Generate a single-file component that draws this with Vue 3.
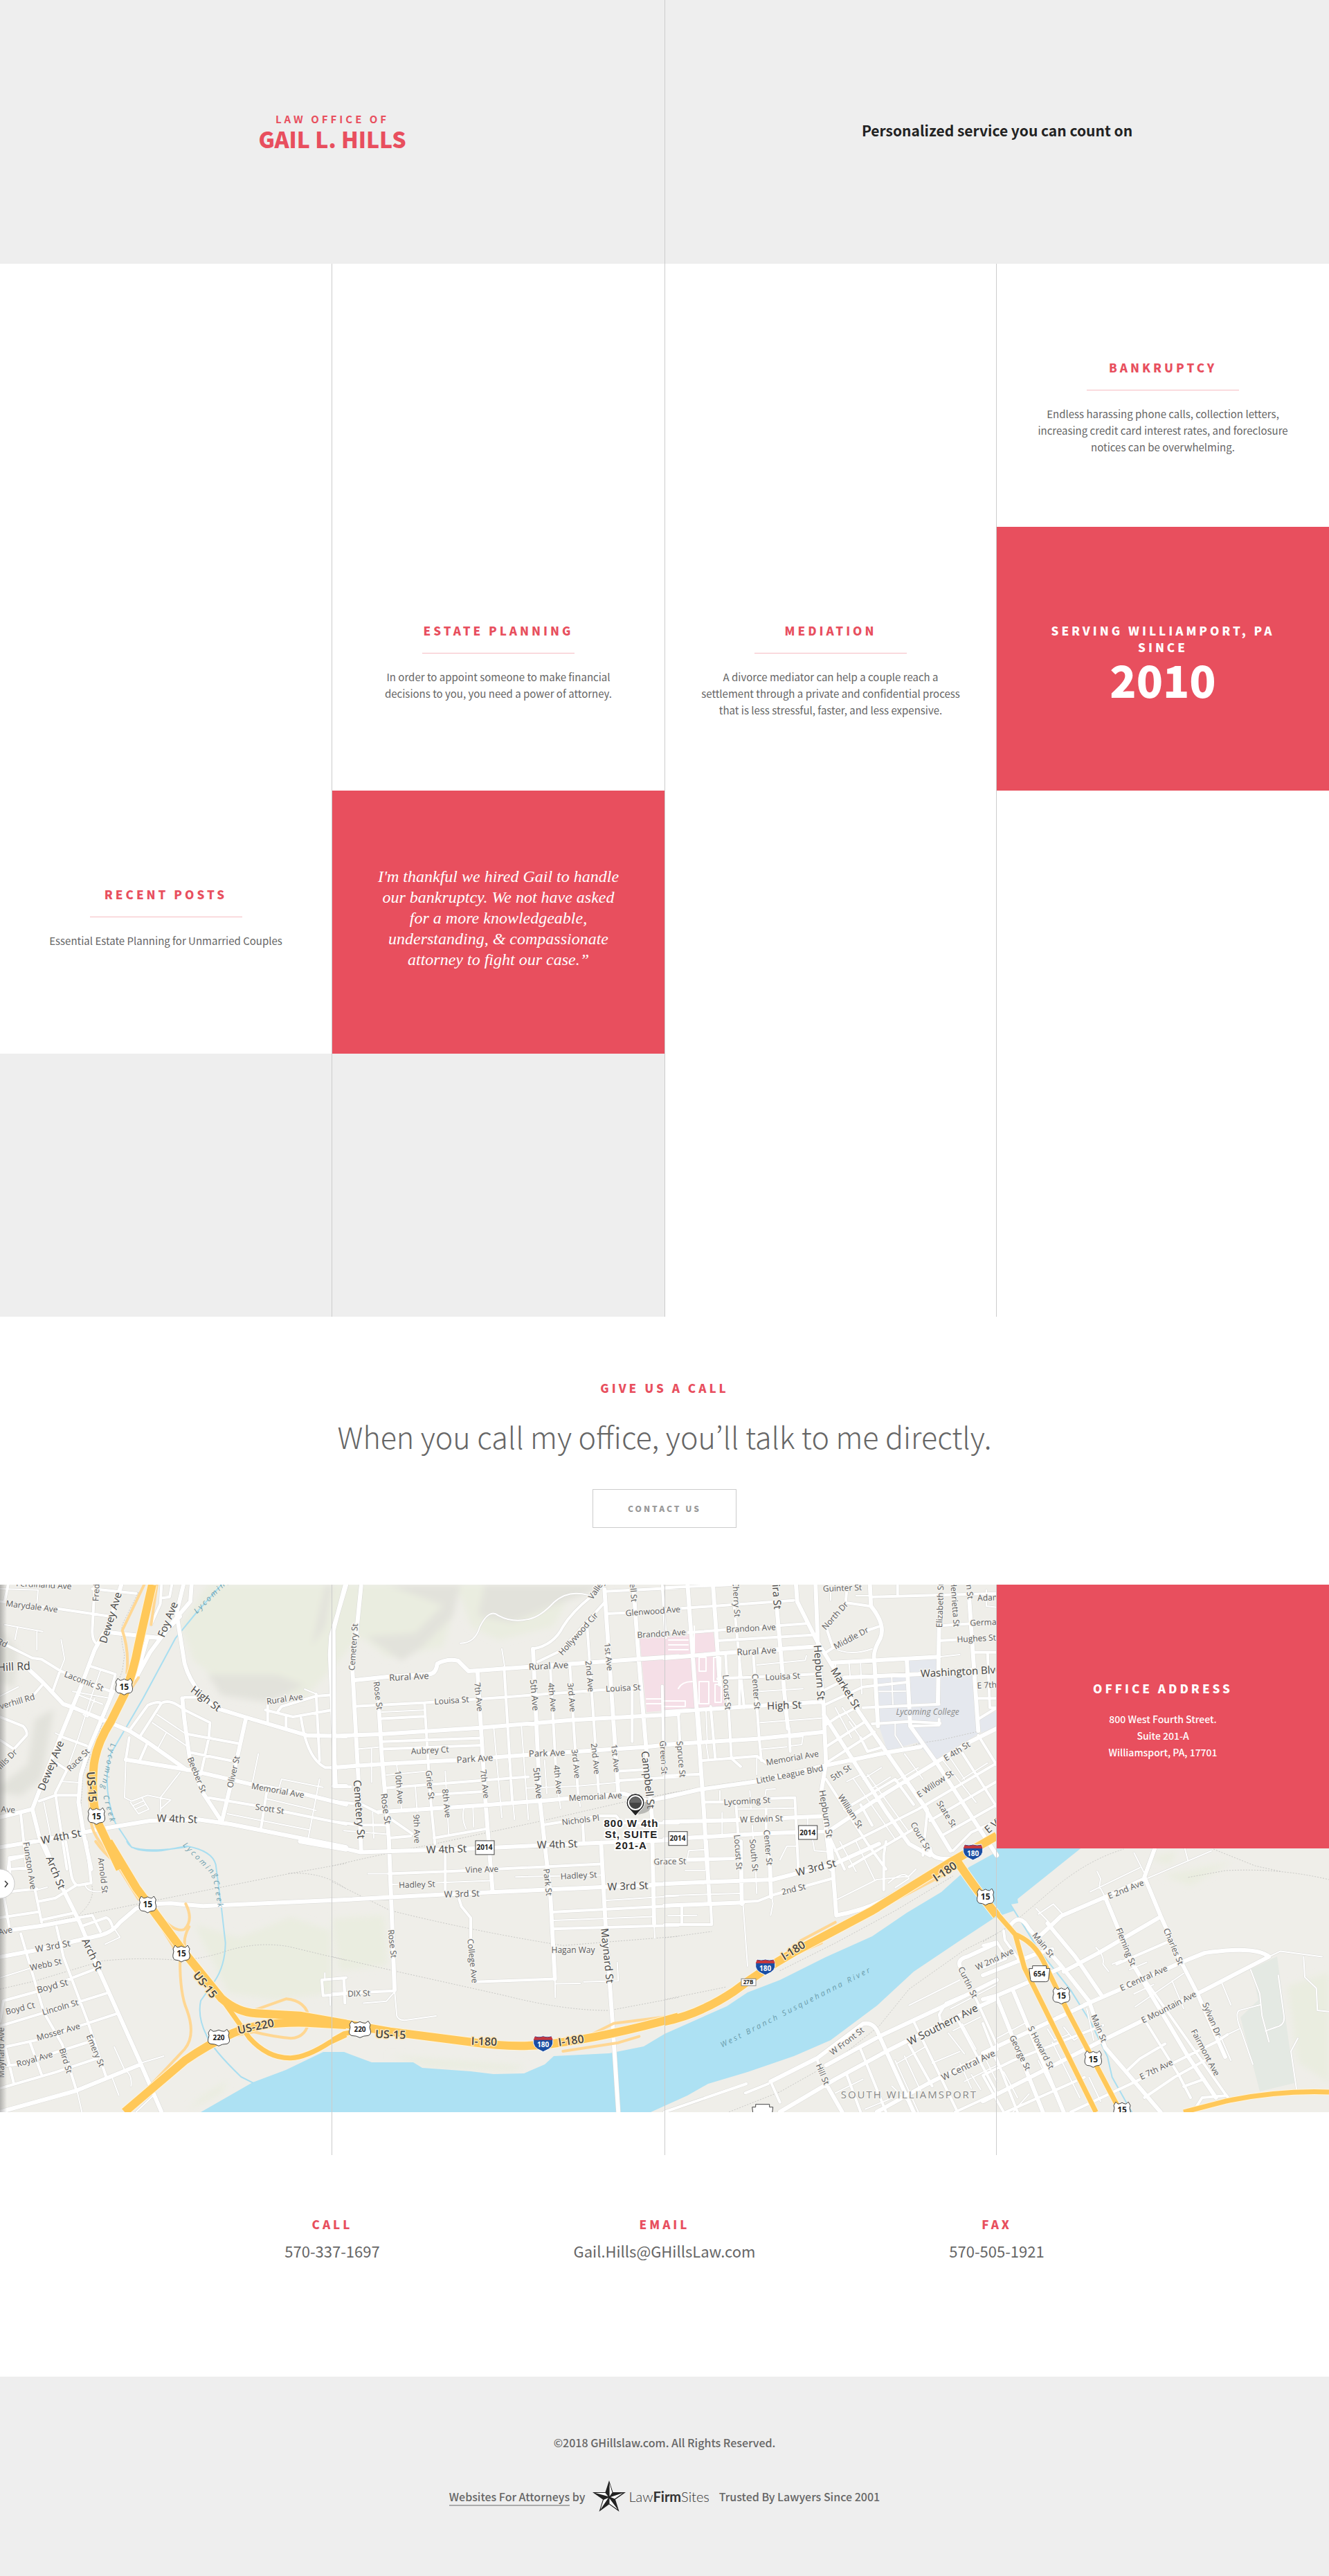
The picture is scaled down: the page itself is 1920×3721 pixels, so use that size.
<script setup>
const cells = [
  [null, null, null, { title: 'Bankruptcy', body: 'Endless harassing phone calls, collection letters, increasing credit card interest rates, and foreclosure notices can be overwhelming.' }],
  [
    null,
    { title: 'Estate Planning', body: 'In order to appoint someone to make financial decisions to you, you need a power of attorney.' },
    { title: 'Mediation', body: 'A divorce mediator can help a couple reach a settlement through a private and confidential process that is less stressful, faster, and less expensive.' },
    { kind: 'since', title: 'Serving Williamport, PA Since', year: '2010' },
  ],
  [
    { title: 'Recent Posts', body: 'Essential Estate Planning for Unmarried Couples', link: true },
    { kind: 'quote', body: "I'm thankful we hired Gail to handle our bankruptcy. We not have asked for a more knowledgeable, understanding, & compassionate attorney to fight our case.”" },
    null,
    null,
  ],
  [{ kind: 'grey' }, { kind: 'grey' }, null, null],
].flat()

const contacts = [
  { title: 'Call', value: '570-337-1697', href: 'tel:5703371697' },
  { title: 'Email', value: 'Gail.Hills@GHillsLaw.com', href: 'mailto:Gail.Hills@GHillsLaw.com' },
  { title: 'Fax', value: '570-505-1921', href: 'tel:5705051921' },
]

// The map is drawn from six sheets. Each has its own origin and units per map pixel.
// Labels are [text, startX, startY, endX, endY, size, tone].
const sheets = [
  {
    ox: 0, oy: -9, sx: 3, sy: 3,
    wide: [
      'M525,30 L470,200 L410,310 L350,470 L260,690 L205,830 L140,1000',
      'M795,27 L765,150 L800,370 Q820,440 870,500 L930,560 L1060,600 L1330,680 L1500,684',
      'M830,27 L825,100 L740,200 L650,320 L590,430', 'M480,235 L690,258 L780,165',
      'M110,380 L185,450 L275,545 L320,560 L440,610 L560,660 L640,710 L810,830',
      'M0,1165 L150,1140 L470,1080 L650,1050 L860,1045 L1000,1065 L1500,1165',
      'M790,520 L800,620 L825,800 L880,930 L965,1060', 'M1065,610 L1025,790 L960,1060',
      'M545,785 L820,830 L1080,890 L1300,930 L1500,980', 'M1500,30 L1435,250 L1430,330 L1455,900 L1500,900',
      'M490,490 L440,610 L385,740 L350,850 L340,970 L365,1120 L395,1260', 'M0,1035 L140,1000 L170,1120 L215,1220 L230,1260',
      'M640,255 L590,430',
    ],
    mid: [
      'M0,100 L240,130 L480,165', 'M400,45 L590,65', 'M410,27 L400,230 Q400,270 420,285', 'M700,27 L695,110 L655,200', 'M745,27 L735,80 L705,85',
      'M30,290 L140,345 L180,350 L260,400 L480,490', 'M185,460 L150,500', 'M260,400 L230,485', 'M0,600 L100,640 Q120,660 115,680 L60,740 L0,700',
      'M390,380 L500,415 L475,510', 'M265,685 L375,725', 'M245,800 L290,830 L240,930 L250,1000 L290,1260', 'M170,965 L240,940 L345,940',
      'M90,1020 L115,1260', 'M850,515 L800,515 Q780,530 795,570', 'M700,540 Q740,520 800,570 L910,625 L905,690 L870,850',
      'M560,660 L640,550 Q680,530 700,540 L610,680', 'M560,690 L545,785', 'M640,710 L605,790', 'M815,675 L1030,715', 'M830,755 L1000,790',
      'M905,950 L1110,985 L1230,1010 L1500,1065', 'M1155,930 L1130,1090', 'M1160,540 L1160,620', 'M1205,575 L1220,555 L1370,510 L1440,505',
      'M1150,570 L1270,600 L1440,570', 'M1240,600 L1240,650', 'M1370,500 L1385,790', 'M1305,605 Q1330,780 1410,820 L1500,820', 'M1440,684 L1500,684',
      'M35,1260 L40,1220 L120,1200', 'M35,27 L20,100',
    ],
    thin: [
      'M0,45 L165,50 L160,110', 'M20,200 L185,230', 'M160,225 L160,310', 'M75,215 L65,265', 'M265,265 L280,350 L260,400', 'M435,400 L390,530 L340,690 L290,830',
      'M340,505 L445,545', 'M315,490 L480,520', 'M360,590 L380,600 L410,520', 'M240,670 L270,685', 'M0,510 L80,470', 'M270,880 L345,885', 'M190,970 L220,1120',
      'M680,590 L800,670', 'M660,625 L815,730', 'M720,670 L685,735', 'M985,1020 L1340,1090', 'M1385,870 L1335,1130', 'M1155,955 L1370,1005',
      'M1210,905 L1220,870 L1400,905', 'M1120,760 L1095,880', 'M545,790 L540,950 L570,965 L640,940 L740,960 L695,1000', 'M780,840 L695,950 L697,1010',
      'M565,970 L600,1020 L645,1000 L615,950', 'M575,985 L620,965 M585,1000 L630,980', 'M1320,480 L1370,500',
    ],
    rail: ['M600,60 L530,200 Q520,260 540,330 L530,400 L440,640 L360,850 L350,1000 L375,1130 L390,1260'],
    ramp: ['M625,27 L530,225 Q560,310 550,410', 'M680,27 L655,200', 'M600,430 L560,490', 'M385,900 L395,1060 Q410,1140 510,1220 L550,1260'],
    creek: ['M960,27 L850,150 L760,260 L620,520 L480,760 Q440,900 500,1060 L570,1165 Q640,1190 810,1163'],
    motor: ['M660,27 L600,290 Q580,400 540,500 L480,620 Q410,730 405,830 Q395,970 425,1060 L520,1260'],
    labels: [
      ['Ferdinand Ave', 60, 20, 320, 35, 12], ['Marydale Ave', 32, 108, 244, 135, 12], ['Fredrick St', 414, 110, 424, -90, 12], ['Dewey Ave', 447, 275, 511, 65, 15],
      ['Foy Ave', 697, 250, 757, 105, 15], ['Rd', -8, 270, 28, 288, 12], ['Hill Rd', 5, 385, 115, 380, 16], ['Lacomic St', 285, 415, 443, 475, 12],
      ['Overhill Rd', -25, 562, 147, 512, 12], ['Mills Dr', -20, 835, 66, 748, 12], ['Dewey Ave', 180, 912, 260, 710, 15], ['Race St', 297, 828, 380, 745, 12],
      ['High St', 838, 480, 947, 562, 15], ['Rural Ave', 1159, 533, 1308, 512, 12], ['Beeber St', 825, 782, 882, 920, 12], ['Oliver St', 995, 912, 1028, 765, 12],
      ['Memorial Ave', 1097, 900, 1311, 938, 12], ['Scott St', 1110, 990, 1228, 1008, 12], ['W 4th St', 683, 1038, 852, 1045, 15], ['W 4th St', 180, 1135, 348, 1103, 15],
      ['Ave', 3, 1000, 67, 1003, 12], ['US-15', 393, 840, 402, 967, 16, 'dark'], ['Lycoming', 848, 142, 990, 0, 11, 'water'], ['Lycoming', 488, 728, 450, 910, 11, 'water'], ['Creek', 460, 945, 490, 1055, 11, 'water'],
    ],
    shields: [['us', '15', 538, 469], ['us', '15', 418, 1030]],
  },
  {
    ox: 0, oy: 371, sx: 3, sy: 3,
    wide: [
      'M195,20 L270,200 L345,350 L370,410 L430,560 L600,940 L700,1172', 'M0,500 L160,470 L310,435 L440,405 Q490,390 520,350 L590,290 L680,270 L740,268 L880,280 L1500,252',
      'M0,1172 L330,1080 L600,970', 'M0,390 L180,365 L340,335', 'M1300,0 L1500,35',
    ],
    mid: [
      'M45,170 L40,70 L110,60 M45,120 L120,115', 'M150,200 L180,350', 'M0,225 L60,215 L160,205', 'M15,230 L40,370', 'M0,330 L165,305', 'M180,340 L320,310',
      'M285,0 L310,150 Q320,190 340,190 L395,180 L375,0', 'M165,260 L240,245 L330,190', 'M90,400 L190,740 L270,880 L330,1075', 'M245,370 L275,500 L380,780 L460,1020',
      'M0,780 L15,690 L160,650 L420,550', 'M0,800 L180,745 L470,655', 'M0,895 L160,860 L510,745', 'M0,975 L80,965 L380,870', 'M0,1070 L240,1000 L420,940',
      'M25,900 L60,1050', 'M130,870 L180,1010', 'M340,330 L400,320 L435,390', 'M360,365 L460,330 Q480,335 490,380', 'M1500,590 L1395,600 L1400,668 L1500,660', 'M1490,600 L1495,700',
    ],
    thin: [
      'M160,210 L205,198', 'M370,190 Q380,225 450,215', 'M490,370 L520,415 L455,445', 'M0,590 L130,550', 'M495,890 L540,990 Q575,1010 568,1060', 'M485,1020 L515,1100', 'M610,960 L710,930',
      'M335,1085 L355,1172', 'M665,1100 L590,1172', 'M1408,570 L1408,600 M1430,670 L1432,710',
    ],
    rail: ['M0,640 L150,605 L440,518 Q600,500 780,515 Q860,510 950,485 Q1100,430 1250,455 L1500,515', 'M190,355 L330,325 L600,270 L900,210 L1250,140 L1500,95', 'M1250,138 Q1400,130 1500,205', 'M395,180 Q420,250 340,320'],
    ramp: ['M415,0 Q450,50 500,90 L600,250', 'M680,310 Q760,400 800,380 Q840,340 805,270', 'M820,370 Q790,420 805,470', 'M780,515 Q780,660 810,730 Q850,840 800,900 L640,1070', 'M830,500 L960,660 Q1050,750 1120,725 L1240,682 Q1330,690 1340,770 Q1330,850 1260,853 Q1180,845 1100,825 L1000,845', 'M680,340 L760,470'],
    creek: ['M550,0 Q570,50 700,40 L810,20', 'M810,20 Q920,40 935,100 L960,290 L977,440 Q975,540 930,605 L870,690 Q855,760 895,840 Q920,900 1045,1020 L1095,1045'],
    motor: ['M470,0 L590,200 L790,470 L960,680 Q1030,740 1110,745 L1300,755 L1500,790', 'M540,1172 L800,950 Q900,880 1010,830 Q1130,780 1330,785 L1500,795'],
    motorMid: ['M960,680 L1080,850 Q1160,940 1260,938 Q1330,935 1430,870 L1500,838'],
    labels: [
      ['Funston Ave', 113, 10, 145, 200, 12], ['Arch St', 215, 70, 268, 200, 15], ['Arnold St', 438, 78, 455, 215, 12], ['Arch St', 370, 425, 430, 555, 15], ['Ave', 0, 392, 47, 382, 12],
      ['W 3rd St', 152, 467, 305, 440, 13], ['Webb St', 135, 547, 262, 519, 12], ['Boyd St', 160, 645, 294, 608, 13], ['Boyd Ct', 28, 738, 147, 708, 12], ['Lincoln St', 187, 740, 335, 697, 12],
      ['Mosser Ave', 165, 850, 340, 800, 12], ['Royal Ave', 76, 964, 224, 922, 12], ['Bird St', 270, 900, 300, 1000, 12], ['Emery St', 387, 843, 440, 970, 12], ['Maynard Ave', 5, 1030, 5, 800, 12],
      ['US-15', 848, 570, 930, 672, 16, 'dark'], ['US-220', 1030, 818, 1187, 785, 16, 'dark'], ['Lycoming', 812, 22, 935, 145, 11, 'water'], ['Creek', 938, 175, 957, 285, 11, 'water'],
    ],
    shields: [['us', '15', 640, 273], ['us', '15', 786, 486], ['us', '220', 948, 850]],
  },
  {
    ox: 480, oy: -9, sx: 3, sy: 1.8667,
    wide: [
      'M0,720 L120,738 L620,728 L1180,712 L1500,705', 'M0,868 L480,852 L1180,832 L1500,822', 'M200,630 L640,612 L900,600 L1260,580 L1370,600 L1500,582',
      'M90,275 L240,265 L420,258 Q450,258 455,230 Q500,215 545,222 L590,250 L1500,210', 'M0,425 L210,420 L650,402 L1040,382 L1500,366', 'M0,510 L220,500 L540,490 L860,475 L1350,455 L1500,445',
      'M125,20 L88,250 L115,560 L125,735', 'M195,280 L215,480 L245,700 L255,860 L270,1110', 'M630,255 L665,610 L695,845', 'M870,190 L900,600 L945,850 L965,1080',
      'M1180,30 L1240,580', 'M1305,20 L1330,230 L1385,640 L1395,930', 'M1165,712 L1185,940 L1215,1200 L1240,1439', 'M55,20 L5,140 L10,560',
    ],
    mid: [
      'M100,345 L400,335 L750,320 L1180,300 L1340,292', 'M230,565 L640,545 L850,535', 'M435,583 L650,575', 'M215,440 L650,430', 'M215,378 L400,372', 'M215,460 L650,450', 'M0,560 L80,562', 'M400,335 L425,590 L445,715',
      'M745,240 L780,600', 'M945,240 L975,580', 'M1030,235 L1065,580', 'M1105,130 L1155,580', 'M1430,20 L1445,160', 'M1430,290 L1435,440', 'M870,240 L870,190 Q960,180 1000,130 Q1040,90 1120,50 L1180,17',
      'M890,225 L990,195 L1180,65', 'M245,796 L500,790 L1165,770', 'M550,865 L560,885 L600,915 L600,980 L615,1088 L965,1080', 'M950,900 L1500,882', 'M955,945 L1500,935', 'M490,740 L490,850',
      'M0,1080 L50,1078 L55,1120', 'M0,1120 L270,1112', 'M1185,35 L1500,25', 'M1190,95 L1300,92 L1500,88', 'M1340,150 L1500,145', 'M910,665 L1160,640 L1230,640 L1255,660 L1500,660', 'M1085,650 L1090,710',
      'M0,600 L130,610 L200,632', 'M245,645 L350,690', 'M0,655 L120,665 L240,665', 'M440,700 L670,675', 'M1240,520 L1350,515', 'M1300,300 L1300,440', 'M1245,545 L1500,535', 'M245,700 L340,695',
    ],
    thin: [
      'M555,175 Q620,175 640,130 Q680,80 720,100 Q780,120 850,110 Q900,105 960,65 Q1020,30 1110,45', 'M155,796 L245,796', 'M260,825 L690,815', 'M795,805 L1165,800', 'M955,922 L1390,912', 'M1190,868 L1500,856',
      'M215,360 L395,355', 'M280,505 L300,620', 'M360,560 L368,630', 'M490,520 L505,690', 'M700,402 L735,645', 'M765,480 L790,650', 'M820,400 L850,650', 'M735,190 L748,240', 'M965,1080 L967,1130',
      'M970,1093 L1075,1092', 'M1090,1088 L1240,1085 L1235,1035', 'M270,1110 L280,1180 Q290,1195 330,1190 L450,1180', 'M135,1145 L235,1140 L270,1115', 'M980,580 L990,620 M1065,580 L1075,615',
      'M235,530 L410,520', 'M170,460 L170,550', 'M110,460 L200,455', 'M570,620 Q560,650 580,675', 'M610,615 L613,670', 'M920,490 L930,580', 'M840,565 L1060,560 L1245,550', 'M1395,930 L1398,970', 'M175,630 L180,700', 'M50,680 L240,690',
    ],
    rail: ['M0,775 Q200,745 450,715 L900,655 L1250,605 L1500,575', 'M0,818 L250,895 Q600,950 1000,990 L1500,965', 'M0,1020 L280,1060 L750,1125 Q1000,1165 1200,1165 L1500,1130'],
    ramp: ['M1090,1240 L1220,1200 L1500,1178', 'M1000,1275 L1240,1252 L1330,1235'],
    creek: [],
    motor: ['M0,1195 L250,1222 L600,1250 Q800,1268 950,1255 Q1200,1235 1500,1182'],
    motorMid: ['M0,1245 L50,1228 L110,1220'],
    labels: [
      ['Cemetery St', 85, 245, 98, 125, 12], ['Rural Ave', 248, 268, 417, 262, 13], ['Rose St', 190, 275, 207, 357, 12], ['Louisa St', 446, 332, 589, 326, 12], ['7th Ave', 628, 282, 641, 357, 12],
      ['5th Ave', 870, 272, 883, 357, 13], ['4th Ave', 948, 283, 960, 358, 12], ['3rd Ave', 1032, 283, 1043, 358, 12], ['2nd Ave', 1110, 225, 1122, 303, 12], ['1st Ave', 1192, 178, 1204, 245, 12],
      ['Rural Ave', 852, 238, 1022, 233, 13], ['Hollywood Cir', 995, 198, 1138, 100, 12], ['Valley Rd', 1122, 50, 1200, -20, 12], ['Campbell St', 1292, -60, 1308, 62, 12], ['Glenwood Ave', 1283, 93, 1500, 84, 12],
      ['Brandon Ave', 1328, 152, 1530, 146, 12], ['Louisa St', 1189, 298, 1332, 293, 12], ['Aubrey Ct', 346, 466, 501, 461, 12], ['Park Ave', 540, 489, 695, 483, 13], ['Park Ave', 853, 473, 1008, 469, 13],
      ['10th Ave', 284, 520, 297, 606, 12], ['Grier St', 418, 520, 430, 594, 12], ['8th Ave', 489, 570, 502, 643, 12], ['7th Ave', 654, 518, 668, 590, 12], ['5th Ave', 884, 510, 899, 593, 13],
      ['4th Ave', 972, 505, 985, 580, 12], ['3rd Ave', 1050, 462, 1063, 537, 12], ['2nd Ave', 1134, 447, 1148, 525, 12], ['1st Ave', 1222, 450, 1234, 520, 12], ['Campbell St', 1355, 468, 1382, 618, 15],
      ['Green St', 1432, 440, 1440, 525, 12], ['Cemetery St', 108, 545, 126, 700, 15], ['Rose St', 223, 580, 242, 662, 13], ['9th Ave', 365, 640, 368, 710, 12], ['Memorial Ave', 1032, 592, 1249, 585, 12],
      ['Nichols Pl', 1000, 657, 1153, 646, 12], ['W 4th St', 411, 732, 579, 728, 15], ['W 4th St', 890, 719, 1060, 715, 15], ['Vine Ave', 581, 786, 716, 783, 12], ['Hadley St', 293, 827, 441, 824, 12],
      ['Hadley St', 994, 803, 1142, 799, 12], ['W 3rd St', 485, 852, 638, 849, 13], ['W 3rd St', 1196, 831, 1366, 828, 15], ['Park St', 928, 785, 940, 853, 12], ['Rose St', 255, 950, 266, 1020, 12],
      ['College Ave', 599, 975, 617, 1088, 12], ['Hagan Way', 958, 1003, 1130, 1002, 12], ['Maynard St', 1180, 945, 1204, 1090, 15], ['DIX St', 70, 1120, 161, 1118, 12], ['Grace St', 1396, 766, 1530, 762, 12],
      ['US-15', 187, 1228, 318, 1231, 16, 'dark'], ['I-180', 602, 1247, 714, 1250, 16, 'dark'], ['I-180', 980, 1251, 1089, 1241, 16, 'dark'],
    ],
    shields: [['us', '220', 120, 1216], ['state', '2014', 660, 726], ['inter', '180', 914, 1254]],
  },
  {
    ox: 960, oy: -9, sx: 3, sy: 3,
    wide: [
      'M655,27 L665,300 L690,560 L700,800 L680,920 L720,1260', 'M570,27 L575,100 L660,270 L740,400 L830,560 L960,750 L1120,980 L1240,1180', 'M0,345 L300,320 L660,295', 'M0,580 L440,550 L680,535', 'M0,720 L400,695 L690,665',
      'M0,950 L150,915 L400,880 L700,810 L960,755 L1110,730', 'M100,27 L145,640 L170,1000 L185,1260', 'M210,27 L240,460', 'M485,110 L520,500 L535,650', 'M890,27 L895,120 Q960,200 935,260 Q900,320 910,360 L925,640',
      'M730,365 L1190,340', 'M780,430 L1100,415 L1340,395', 'M1190,200 L1185,540', 'M1320,80 L1360,660', 'M0,1055 L300,1048 L700,1030', 'M0,1130 L440,1105 L720,1095', 'M1440,650 L1320,710 L960,930 L720,1090', 'M690,590 L960,1010 L1060,1150 L1150,1200',
      'M1050,350 L1065,640 L1180,800 L1440,1200',
    ],
    mid: [
      'M0,135 L560,95', 'M0,40 L300,27', 'M100,235 L620,195', 'M230,270 L640,245', 'M300,100 L345,560', 'M325,320 L325,560', 'M385,330 L410,690 L420,790', 'M265,330 L290,780', 'M540,650 L545,750', 'M160,790 L400,770 L440,800',
      'M60,590 L75,850', 'M0,855 L155,848', 'M230,435 L650,415', 'M200,555 L220,780', 'M290,780 L330,815', 'M175,970 L260,968', 'M420,955 L565,950 L580,1260', 'M310,980 L320,1120', 'M440,1000 L440,1100', 'M0,1225 L300,1215',
      'M790,50 L785,105 L890,120', 'M900,80 L1440,65', 'M700,210 L730,300', 'M700,320 L740,295 L880,225 L940,205', 'M690,550 L860,470 L1050,450', 'M860,560 L1190,545', 'M900,630 L1060,620 L1195,628', 'M1070,640 L1190,635 L1190,610', 'M680,490 L760,450',
      'M700,730 L870,620', 'M700,800 L910,665', 'M690,640 L750,600 L830,560', 'M850,690 L880,750 L950,730', 'M1190,270 L1280,265', 'M1010,30 L1010,70', 'M1195,205 L1340,195', 'M1400,320 L1410,560 L1440,560', 'M1360,610 L1440,560', 'M1345,320 L1440,320', 'M1360,520 L1440,520',
      'M700,870 L880,1150 L960,1260', 'M780,1000 L1000,870', 'M740,1180 L1100,1000 L1440,800', 'M800,1250 L1090,1080', 'M960,750 L1140,1000 L1120,1200', 'M1360,680 L1440,810', 'M1280,740 L1440,990', 'M1150,1050 L1440,880', 'M1210,1110 L1440,980',
      'M1000,870 L1080,980', 'M850,980 L900,1070', 'M1250,1180 L1330,1100 L1440,1050', 'M720,1130 L780,1260',
    ],
    thin: [
      'M400,375 L610,355 L615,335', 'M410,490 L600,478', 'M415,625 L680,605', 'M545,690 L600,685 L595,720 L550,725', 'M415,740 L530,730', 'M730,300 Q800,340 900,305', 'M1190,340 L1280,330', 'M800,370 L805,430', 'M850,370 L855,500', 'M740,370 L745,400',
      'M930,490 L1045,488', 'M985,430 L990,545', 'M1000,620 L1000,680 L1035,735', 'M150,580 L160,700', 'M180,570 L185,700', 'M180,710 L190,780', 'M240,920 L240,960', 'M370,920 L375,1000', 'M435,950 L440,915 L480,912', 'M400,780 L400,850',
      'M250,1015 L250,1120', 'M380,1070 L385,1130', 'M320,1000 L560,995', 'M100,1210 L105,1180 L180,1175', 'M500,1220 L530,1160 L570,1160', 'M720,60 L720,95', 'M830,75 L890,75', 'M740,560 L810,690 M770,560 L830,640 M800,620 L850,690',
      'M860,870 L940,820 M900,910 L980,860 M790,880 L850,850', 'M820,870 L1000,1130 M880,850 L1060,1100', 'M1000,880 L1100,820', 'M1040,760 L1120,870', 'M1200,780 L1350,970', 'M1240,780 L1300,870 M1290,870 L1400,800', 'M640,1120 L650,1180 L720,1185',
      'M1395,50 L1395,120 L1440,125', 'M620,1040 L620,1100',
    ],
    rail: ['M0,935 L160,905 L400,870', 'M1000,755 L1100,715 L1200,700 L1350,665'],
    ramp: [],
    creek: [],
    motor: [],
    labels: [
      ['Ave', 10, 136, 67, 134, 12], ['n Ave', 5, 236, 88, 233, 12], ['Cherry St', 308, 15, 316, 165, 12], ['Almira St', 478, -40, 490, 118, 15], ['Brandon Ave', 273, 221, 476, 211, 12], ['Rural Ave', 314, 320, 484, 310, 13],
      ['Louisa St', 441, 429, 583, 421, 12], ['High St', 447, 553, 591, 547, 15], ['Hepburn St', 662, 293, 680, 523, 15], ['Market St', 732, 392, 838, 560, 15], ['Center St', 392, 418, 402, 563, 12], ['Locust St', 265, 422, 276, 565, 12],
      ['Guinter St', 691, 45, 851, 38, 12], ['North Dr', 700, 205, 778, 118, 12], ['Middle Dr', 740, 295, 877, 222, 12], ['Elizabeth St', 1190, 207, 1198, 25, 12], ['Henrietta St', 1252, 20, 1266, 200, 12], ['n St', 1320, 28, 1326, 88, 12], ['Adams St', 1370, 85, 1500, 80, 12],
      ['Germania St', 1335, 193, 1520, 185, 12], ['Hughes St', 1273, 264, 1431, 256, 12], ['Washington Blvd', 1111, 414, 1460, 393, 15], ['E 7th St', 1356, 464, 1480, 458, 12], ['Lycoming College', 996, 578, 1285, 578, 12, 'place'],
      ['Spruce St', 66, 710, 78, 857, 12], ['Memorial Ave', 446, 797, 662, 760, 12], ['Little League Blvd', 403, 876, 682, 823, 12], ['5th St', 724, 868, 804, 815, 12], ['William St', 762, 940, 850, 1077, 12], ['Hepburn St', 683, 920, 716, 1120, 13],
      ['Lycoming St', 262, 969, 453, 960, 12], ['W Edwin St', 332, 1045, 507, 1040, 12], ['Locust St', 314, 1115, 325, 1258, 12], ['South St', 382, 1135, 394, 1265, 12], ['Center St', 443, 1093, 455, 1240, 12],
      ['E 4th St', 1214, 782, 1320, 715, 12], ['E Willow St', 1098, 940, 1248, 840, 12], ['State St', 1190, 968, 1255, 1073, 12], ['Court St', 1077, 1062, 1142, 1173, 12], ['Grace St', -40, 1228, 87, 1225, 12], ['E Via Bella', 1393, 1095, 1560, 960, 15],
    ],
    shields: [['state', '2014', 57, 1127], ['state', '2014', 620, 1101]],
  },
  {
    ox: 960, oy: 371, sx: 3, sy: 3,
    wide: [
      'M0,183 L470,165 L740,95 L930,10', 'M0,278 L340,265', 'M180,0 L195,260', 'M720,0 L745,320', 'M330,0 L335,270', 'M455,60 L462,240', 'M500,1172 L740,1030 L970,905 L1200,790 L1440,680', 'M700,970 L940,840 L1240,700 L1440,600', 'M1280,540 Q1270,510 1310,500 L1440,440',
      'M745,320 Q900,290 990,230 L1160,130', 'M460,1040 L660,940 L860,790 Q910,780 930,840 L1080,1172', 'M1150,30 Q1150,80 1240,75', 'M920,1172 L1140,1050 L1440,900', 'M700,1050 L770,1172',
    ],
    mid: [
      'M0,360 L205,360 L200,270', 'M75,285 L75,355', 'M0,78 L330,72', 'M340,262 L405,258 L470,232 L730,160', 'M460,1040 L500,1130', 'M850,900 L960,1172', 'M790,1010 L850,1172', 'M1080,780 L1270,1172', 'M1060,880 L1160,1060',
      'M1270,770 L1440,1090', 'M1200,790 L1190,750 L1220,700 L1290,670', 'M1340,660 L1440,880', 'M0,1172 L355,1050', 'M960,0 L950,60 L950,210', 'M350,1090 L450,1050', 'M1260,1172 L1440,1090', 'M660,940 L670,970',
    ],
    thin: [
      'M0,235 L330,225', 'M15,322 L140,320', 'M90,125 L175,125', 'M395,130 L400,225', 'M340,265 L360,540', 'M465,240 L470,270 L460,320', 'M500,80 L530,20 L570,20', 'M760,0 L830,130', 'M830,0 L910,165', 'M750,250 L920,165 L1060,150 L1090,120', 'M1060,710 L1280,600', 'M1240,725 L1440,620',
      'M740,1090 L860,1030', 'M1000,950 L1100,1172', 'M1040,930 L1110,1080', 'M1010,960 L1130,890', 'M870,1160 L990,1110', 'M1160,960 L1280,910', 'M1230,830 L1300,920', 'M1290,790 L1350,900 M1250,820 L1370,760', 'M1280,960 L1330,1070', 'M1300,1040 L1440,970', 'M985,1060 L1060,1130', 'M1330,1010 L1370,1075', 'M1390,940 L1440,1040',
      'M970,180 Q1040,120 1060,160 L1000,200',
    ],
    rail: ['M0,418 L205,390', 'M0,685 L270,630', 'M500,560 L740,440 L1000,300 L1250,150', 'M280,1172 L500,1085 L740,950 L930,800 L1060,640 L1300,470 L1440,400'],
    ramp: ['M590,430 L740,350', 'M470,530 L680,440', 'M960,275 L1200,150'],
    creek: [],
    motor: ['M0,780 Q150,750 300,650 Q420,560 560,480 L900,300 L1240,90 L1440,-25', 'M1265,80 Q1330,180 1440,320'],
    labels: [
      ['W 3rd St', 572, 135, 740, 92, 15], ['2nd St', 511, 219, 608, 194, 12], ['I-180', 510, 502, 605, 442, 16, 'dark'], ['I-180', 1168, 162, 1262, 98, 16, 'dark'], ['W Front St', 724, 915, 857, 815, 12], ['Hill St', 668, 967, 703, 1050, 12],
      ['W Southern Ave', 1058, 870, 1352, 718, 15], ['Curtin St', 1285, 548, 1345, 672, 12], ['W Central Ave', 1200, 1027, 1432, 912, 13], ['SOUTH WILLIAMSPORT', 768, 1097, 1352, 1097, 15, 'town'],
      ['West Branch Susquehanna River', 252, 882, 888, 552, 11, 'water'],
    ],
    shields: [['inter', '180', 437, 543], ['inter', '180', 1337, 45], ['us', '15', 1391, 240], ['exit', '27B', 363, 610], ['key', '', 425, 1175]],
  },
  {
    ox: 1420, oy: -9, sx: 3, sy: 1.8667,
    wide: [
      'M745,728 L700,805 L770,910 L860,1035 L930,1120 L1050,1290', 'M245,965 L340,910 L545,855 L700,810', 'M530,860 L650,1040 L890,1290 L1010,1400', 'M120,935 Q160,900 200,945 L340,1045 L460,1140 L530,1265 L620,1330 L770,1439', 'M0,1070 L240,1010 L300,1000',
      'M350,1060 L500,1010 L770,912', 'M280,930 L400,1020 L515,1125', 'M0,1135 L60,1125 L340,1050', 'M440,1150 L700,1080 L860,1035 L960,1010 Q1180,990 1240,1020 L960,1110 L520,1245 L0,1410', 'M60,1130 L260,1439', 'M130,1110 L350,1439', 'M0,1280 L460,1145',
    ],
    mid: [
      'M0,990 L60,980 L100,1020', 'M90,950 L95,975 L170,1040', 'M0,1050 L100,1025', 'M620,1330 L680,1295 L790,1255', 'M380,1439 L650,1360 L1010,1250 L1060,1230', 'M0,1200 L150,1439', 'M700,1080 L1050,1390 L1070,1405', 'M910,1439 L950,1400 L1050,1395', 'M700,1400 L830,1345 L960,1300',
      'M710,1200 L850,1340 L900,1400', 'M870,1370 L960,1350', 'M0,1340 L90,1439', 'M100,1439 L440,1345', 'M0,1340 L130,1300 L520,1205', 'M580,1040 L820,975',
    ],
    thin: [
      'M465,845 L680,780', 'M655,740 L700,795', 'M495,790 L510,810 L505,830 L530,860', 'M715,808 L990,735', 'M875,728 L888,760', 'M230,890 L290,930', 'M240,905 L305,878 L345,905', 'M490,995 Q530,1020 520,1040 L545,1060', 'M660,1155 L870,1065', 'M655,1120 L740,1095', 'M635,1055 L710,1035', 'M560,1040 L600,1030', 'M1035,1090 L1075,1150', 'M1060,1230 L1110,1215', 'M1030,1235 L1075,1300',
      'M1240,1020 L1290,1005 L1470,1020', 'M1390,1020 L1395,1075 L1445,1105 L1450,1165 L1500,1168', 'M1160,1055 L1200,1120 L1210,1180 L1240,1250', 'M1200,1150 L1110,1165 Q1090,1175 1120,1220 L1170,1310', 'M1280,1070 L1305,1180 Q1310,1205 1270,1210 L1225,1220', 'M1365,1240 L1335,1275 L1360,1380', 'M820,1085 L870,1160', 'M450,1160 L480,1245',
      'M90,1330 L150,1400', 'M240,1300 L320,1400', 'M300,1250 L420,1400', 'M30,1270 L90,1340', 'M280,1215 L310,1245 L370,1230', 'M350,1210 L395,1245 L420,1235', 'M180,1200 L60,1240', 'M200,1390 L130,1439', 'M460,1345 L510,1410',
    ],
    rail: ['M0,980 L120,935 L300,840 Q450,760 610,730', 'M890,806 L1050,788 Q1280,780 1500,812', 'M1000,730 L1180,775 L1290,790'],
    ramp: [],
    creek: ['M120,880 L160,920 L240,1000 L380,1110 L470,1200 L540,1290 L560,1345 L645,1439'],
    motor: [],
    motorMid: ['M0,858 L70,910 L140,960 Q220,980 260,1030 L370,1170 L590,1430', 'M140,960 L180,1050 L260,1150 L490,1439', 'M870,1439 L1050,1410 Q1280,1380 1500,1385'],
    labels: [
      ['E 2nd Ave', 546, 857, 692, 820, 12], ['Fleming St', 588, 945, 652, 1042, 12], ['Charles St', 794, 945, 858, 1040, 12], ['Main St', 223, 958, 300, 1018, 12], ['Main St', 480, 1178, 526, 1248, 12], ['W 2nd Ave', -30, 1050, 130, 1003, 12], ['E Central Ave', 598, 1105, 795, 1050, 12],
      ['E Mountain Ave', 693, 1192, 918, 1120, 12], ['Sylvan Dr', 962, 1145, 1024, 1234, 12], ['Fairmont Ave', 912, 1218, 1016, 1338, 12], ['S Howard St', 208, 1210, 296, 1320, 12], ['George St', 126, 1235, 196, 1323, 12], ['E 7th Ave', 684, 1344, 818, 1304, 12],
    ],
    shields: [['key', '654', 245, 1067], ['us', '15', 340, 1125], ['us', '15', 478, 1296], ['us', '15', 603, 1434]],
  },
]

const round = (n) => Math.round(n * 10) / 10
const px = (s, x) => round(s.ox + x / s.sx)
const py = (s, y) => round(s.oy + y / s.sy)
const toMap = (s, d) => d.replace(/(-?\d+),(-?\d+)/g, (_, x, y) => `${px(s, +x)},${py(s, +y)}`)
  .replace(/Q(\S+) (-?\d+),(-?\d+)/g, 'Q$1 $2,$3')
const collect = (key) => sheets.map((s) => (s[key] || []).map((d) => toMap(s, d)).join(' ')).join(' ')

const roads = {
  wide: collect('wide'), mid: collect('mid'), thin: collect('thin'), rail: collect('rail'),
  ramp: collect('ramp'), creek: collect('creek'), motor: collect('motor'), motorMid: collect('motorMid'),
}

const labels = sheets.flatMap((s) => s.labels.map(([text, x1, y1, x2, y2, size, tone]) => {
  const ax = px(s, x1), ay = py(s, y1), bx = px(s, x2), by = py(s, y2)
  const angle = Math.round(Math.atan2(by - ay, bx - ax) * 180 / Math.PI)
  return { text, size, tone: tone || (size > 14 ? 'main' : 'street'), move: `translate(${round((ax + bx) / 2)} ${round((ay + by) / 2)}) rotate(${angle})` }
}))

const shields = sheets.flatMap((s) => s.shields.map(([kind, text, x, y]) => ({ kind, text, move: `translate(${px(s, x)} ${py(s, y)})` })))
</script>

<template>
  <div class="page">
    <header class="top">
      <a class="brand" href="#"><span class="brand-small">Law Office of</span><span class="brand-name">Gail L. Hills</span></a>
      <p class="tagline">Personalized service you can count on</p>
    </header>

    <main>
      <section class="tiles">
        <div v-for="(cell, i) in cells" :key="i" class="tile" :class="cell && cell.kind">
          <template v-if="cell && cell.kind === 'since'">
            <h2 class="label">{{ cell.title }}</h2>
            <p class="year">{{ cell.year }}</p>
          </template>
          <blockquote v-else-if="cell && cell.kind === 'quote'">{{ cell.body }}</blockquote>
          <template v-else-if="cell && cell.title">
            <h2 class="label">{{ cell.title }}</h2>
            <hr />
            <p class="copy"><a v-if="cell.link" href="#">{{ cell.body }}</a><template v-else>{{ cell.body }}</template></p>
          </template>
        </div>
      </section>

      <section class="cta">
        <h2 class="label">Give us a call</h2>
        <p class="headline">When you call my office, you’ll talk to me directly.</p>
        <button type="button">Contact us</button>
      </section>

      <section class="location">
        <div class="map">
          <svg class="map-art" viewBox="0 0 1920 762" preserveAspectRatio="xMidYMid slice" role="img" aria-label="Street map of Williamsport, PA">
            <defs>
              <filter id="soft" x="-10%" y="-10%" width="120%" height="120%"><feGaussianBlur stdDeviation="5" /></filter>
              <linearGradient id="edge"><stop offset="0" stop-color="#555" stop-opacity=".4" /><stop offset="1" stop-color="#555" stop-opacity="0" /></linearGradient>
            </defs>
            <rect width="1920" height="762" fill="#efeee9" />
            <g filter="url(#soft)">
              <path fill="#eaede0" d="M300,0 H620 L655,40 L640,90 L560,105 L520,75 L440,165 L330,150 L280,110 L262,60z M660,0 L830,0 L800,60 L720,80 L680,60z" />
              <path fill="#e2e2db" d="M560,0 H665 L655,45 L610,90 L580,110 L530,75 L600,70 L640,30z M700,0 H880 L800,30 L740,55 L690,45z M470,0 L480,0 L470,60 L450,90z M300,130 L400,130 L440,145 L390,170 L320,160z M0,60 L25,95 L20,150 L0,140z M50,195 L78,180 L60,280 L30,305 L0,300 L0,290 L40,260z" />
              <path fill="#eaede0" d="M480,482 L555,478 L560,550 L490,558z M280,490 L345,510 L420,480 L478,500 L478,590 L400,600 L330,590z M560,680 L760,695 L740,703 L620,697z M1660,395 L1700,385 L1690,405z M1680,420 L1780,400 L1720,435z M1860,580 L1920,560 V720 L1875,690z M290,740 L330,715 L320,735 L270,760z" />
            </g>
            <path fill="#f5dfe7" d="M924,75 L1030,68 L1048,175 L934,184z" />
            <path fill="#e5e8ee" d="M1310,108 L1355,107 L1354,130 L1407,130 L1414,215 L1348,255 L1325,228 L1282,240 L1270,205 L1268,135 L1312,130z M1415,195 L1440,182 V206 L1417,214z" />
            <path fill="#e4e9e3" d="M1808,555 L1845,537 L1870,720 L1820,732 L1792,625 L1818,600z" />
            <path fill="#ade1f3" d="M290,762 L365,719 L413,701 L467,675 L497,675 L537,690 H597 L610,698 L680,703 L713,707 L757,706 L787,693 L800,681 L880,677 L930,667 L960,649 L1050,609 L1080,589 L1127,571 L1193,538 L1260,508 L1310,474 L1360,444 L1400,408 L1440,386 V370 H1575 L1470,454 L1471,460 L1460,462 L1465,471 L1437,481 L1387,514 L1320,559 L1267,608 L1200,658 L1147,681 L1080,704 L1023,721 L993,738 L940,762z" />
            <path class="creek" :d="roads.creek" />
            <path class="rail" :d="roads.rail" />
            <g class="casing">
              <path class="thin" :d="roads.thin" /><path class="mid" :d="roads.mid" /><path class="wide" :d="roads.wide" />
            </g>
            <g class="surface">
              <path class="thin" :d="roads.thin" /><path class="mid" :d="roads.mid" /><path class="wide" :d="roads.wide" />
              <path class="thin" d="M966,80 H994 M966,87 H994 M966,94 H994 M1003,60 V98 M1010,105 V125 L1020,125 V105z M1031,105 V140 L1041,140 V105z M980,150 Q985,140 1000,140 M1010,140 V172 H1024 V140z M1033,144 V170 H1042 V144z M960,168 H990 V176 H960 M934,165 H955 M934,172 H955" />
            </g>
            <path class="ramp" :d="roads.ramp" />
            <path class="motor-casing" :d="roads.motor" /><path class="motor-casing motor-mid" :d="roads.motorMid" />
            <path class="motor" :d="roads.motor" /><path class="motor motor-mid" :d="roads.motorMid" />
            <text v-for="(l, i) in labels" :key="i" class="road-name" :class="l.tone" :font-size="l.size" :transform="l.move" dy=".35em">{{ l.text }}</text>
            <g v-for="(s, i) in shields" :key="'s' + i" class="shield" :transform="s.move">
              <template v-if="s.kind === 'us'">
                <path v-if="s.text.length > 2" d="M-12,-12 L-8,-9 Q-4,-9 0,-11 Q4,-9 8,-9 L12,-12 L15,-7 Q13,-3 15,1 Q17,7 12,9 Q5,9 0,12 Q-5,9 -12,9 Q-17,7 -15,1 Q-13,-3 -15,-7z" />
                <path v-else d="M-9,-12 L-6,-9 Q-3,-9 0,-11 Q3,-9 6,-9 L9,-12 L12,-7 Q10,-3 12,1 Q13,7 9,9 Q4,9 0,12 Q-4,9 -9,9 Q-13,7 -12,1 Q-10,-3 -12,-7z" />
                <text :font-size="s.text.length > 2 ? 10 : 12" dy=".35em">{{ s.text }}</text>
              </template>
              <template v-else-if="s.kind === 'state'">
                <rect x="-13" y="-10" width="27" height="20" /><text font-size="10" dy=".35em">{{ s.text }}</text>
              </template>
              <template v-else-if="s.kind === 'exit'">
                <rect class="exit" x="-10" y="-5" width="21" height="10" /><text font-size="8" dy=".35em">{{ s.text }}</text>
              </template>
              <template v-else-if="s.kind === 'key'">
                <path d="M-10,-12 H10 V-8 H15 L13,8 Q13,11 9,11 H-9 Q-13,11 -13,8 L-15,-8 H-10z" /><text font-size="10" dy=".35em">{{ s.text }}</text>
              </template>
              <template v-else>
                <path d="M-12,-11 Q-6,-9 0,-11 Q6,-9 12,-11 Q18,2 8,8 L0,12 L-8,8 Q-18,2 -12,-11z" class="inter" />
                <path class="cap" d="M-12,-10 Q-6,-8 0,-10 Q6,-8 12,-10 L14,-5 H-14z" />
                <text class="light" font-size="10" dy=".35em" y="2">{{ s.text }}</text>
              </template>
            </g>
            <g transform="translate(918 315)">
              <path d="M4,17 Q25,14 22,2 L8,-4z" fill="#777" opacity=".45" />
              <path d="M0,19 L-8,10 A13,13 0 1 1 8,10z" fill="#222" stroke="#fff" stroke-width="1" />
              <circle r="10" fill="#444" stroke="#fff" stroke-width="2" /><path d="M-8,0 A8,8 0 0 1 8,0z" fill="#666" />
            </g>
            <text class="pin" x="912" y="350">800 W 4th</text><text class="pin" x="912" y="366">St, SUITE</text><text class="pin" x="912" y="382">201-A</text>
            <rect width="10" height="762" fill="url(#edge)" />
            <circle cy="432" r="21" fill="#fff" stroke="#ccc" /><path d="M7,428 L11,432 L7,437" fill="none" stroke="#333" stroke-width="1.5" />
          </svg>
          <address class="office">
            <h2 class="label">Office Address</h2>
            <p>800 West Fourth Street.<br />Suite 201-A<br />Williamsport, PA, 17701</p>
          </address>
        </div>
        <div class="rules" aria-hidden="true"><i></i><i></i><i></i><i></i></div>
      </section>

      <section class="contacts">
        <div v-for="c in contacts" :key="c.title">
          <h2 class="label">{{ c.title }}</h2>
          <p><a :href="c.href">{{ c.value }}</a></p>
        </div>
      </section>
    </main>

    <footer>
      <p>©2018 GHillslaw.com. All Rights Reserved.</p>
      <div class="credit">
        <span><a class="underlined" href="#">Websites For Attorneys</a> by</span>
        <a class="sites" href="#">
          <svg width="48" height="46" viewBox="0 0 48 46" aria-hidden="true">
            <path fill="#222" d="M24,0 L29.5,17 H48 L33,27.5 L38.5,45 L24,34.5 L9.5,45 L15,27.5 L0,17 H18.5z" />
            <path fill="#fff" d="M24.6,4 L28.5,17.5 L24.6,23z M44,18 L32,26.5 L26,24z M36.5,42 L24.5,33.5 V26z M11.5,42 L16,28 L23,25z M4,18 H18.5 L22.5,23z" />
          </svg>
          <span>Law<b>Firm</b>Sites</span>
        </a>
        <span>Trusted By Lawyers Since 2001</span>
      </div>
    </footer>
  </div>
</template>

<style>
body { margin: 0; background: #fff; }
</style>

<style scoped>
.page { color: #666; font-family: "Noto Sans CJK KR", "Noto Sans", sans-serif; font-size: 15px; line-height: 24px; }
h2, p, blockquote, hr { margin: 0; }
a { color: inherit; text-decoration: none; }
.label { color: #e84f5e; font-size: 17px; line-height: 24px; font-weight: 900; letter-spacing: 4px; text-transform: uppercase; }

.top { display: grid; grid-template-columns: 1fr 1fr; height: 381px; background: #eee; text-align: center; }
.brand, .tagline { box-sizing: border-box; padding-bottom: 5px; }
.brand { display: flex; flex-direction: column; justify-content: center; color: #e84f5e; text-transform: uppercase; font-weight: 900; }
.brand-small { font-size: 15px; line-height: 24px; letter-spacing: 4px; font-weight: 700; }
.brand-name { font-size: 32px; line-height: 32px; }
.tagline { display: flex; align-items: center; justify-content: center; border-left: 1px solid #ccc; color: #222; font-size: 21px; font-weight: 700; }

.tiles { display: grid; grid-template-columns: repeat(4, 1fr); grid-template-rows: repeat(4, 1fr); min-height: 1521px; text-align: center; }
.tile { box-sizing: border-box; padding: 138px 50px 0; background-clip: padding-box; }
.tile:nth-child(4n + 1) { border-right: 1px solid #ccc; }
.tile:nth-child(4n + 3) { border-left: 1px solid #ccc; border-right: 1px solid #ccc; }
.tile hr { width: 220px; margin: 20px auto 22px; border: 0; border-top: 1px solid #f6bcc2; }
.grey { background-color: #eee; }
.since, .quote { background: #e84f5e; color: #fff; }
.since .label, .office .label { color: #fff; }
.year { font-size: 63px; line-height: 68px; font-weight: 900; }
.tile.quote { display: flex; align-items: center; justify-content: center; padding: 0 60px 12px; }
blockquote { font: italic 24px/30px "Liberation Serif", serif; }

.cta { display: flex; flex-direction: column; align-items: center; height: 387px; box-sizing: border-box; padding-top: 91px; text-align: center; }
.headline { margin: 29px 0 49px; font-size: 43px; line-height: 56px; font-weight: 300; }
button { width: 208px; height: 56px; border: 1px solid #ccc; background: #fff; color: #999; font: 900 12px/20px "Noto Sans CJK KR", sans-serif; letter-spacing: 3px; text-transform: uppercase; cursor: pointer; }

.location { position: relative; padding-bottom: 62px; }
.map { position: relative; height: 762px; overflow: hidden; }
.map-art { display: block; width: 100%; height: 100%; }
.rules { position: absolute; inset: 0; display: grid; grid-template-columns: repeat(4, 1fr); pointer-events: none; }
.rules i:nth-child(1), .rules i:nth-child(3) { border-right: 1px solid #ccc; }
.rules i:nth-child(3) { border-left: 1px solid #ccc; }
.office { position: absolute; top: 0; right: 0; width: 25%; height: 50%; box-sizing: border-box; padding-top: 138px; background: #e84f5e; color: #fff; font-style: normal; text-align: center; }
.office p { margin-top: 20px; font-size: 14px; font-weight: 500; }

.wide, .mid, .thin, .rail, .ramp, .creek, .motor, .motor-casing { fill: none; stroke-linejoin: round; stroke-linecap: round; }
.surface path { stroke: #fff; }
.casing path { stroke: #d9d9d6; }
.surface .wide { stroke-width: 6px; }
.surface .mid { stroke-width: 4px; }
.surface .thin { stroke-width: 2px; }
.casing .wide { stroke-width: 7px; }
.casing .mid { stroke-width: 5px; }
.casing .thin { stroke-width: 3px; }
.rail { stroke: #c8c8c5; stroke-dasharray: 2 2; stroke-linecap: butt; }
.creek { stroke: #a9def0; stroke-width: 2px; }
.ramp { stroke: #ffd793; stroke-width: 4px; }
.motor { stroke: #ffc859; stroke-width: 12px; stroke-linecap: butt; }
.motor-casing { stroke: #fff4dc; stroke-width: 14px; stroke-linecap: butt; }
.motor.motor-mid { stroke-width: 7px; }
.motor-casing.motor-mid { stroke-width: 9px; }
.road-name { font-family: "Open Sans", sans-serif; font-weight: 500; fill: #5c5c5e; stroke: #f4f3ef; stroke-width: 3px; stroke-linejoin: round; paint-order: stroke; text-anchor: middle; }
.main, .dark { fill: #444; }
.dark { stroke: #ffe7b5; font-weight: 600; }
.water { fill: #6b9cab; font-style: italic; letter-spacing: 3px; stroke: none; }
.place { font-style: italic; fill: #888; stroke: #e5e8ee; }
.town { fill: #888; letter-spacing: 2px; }
.shield path, .shield rect { fill: #fff; stroke: #444; stroke-width: 1px; }
.shield .inter { fill: #1a4ea3; stroke: #fff; }
.shield .cap { fill: #c2373f; stroke: none; }
.shield .exit { stroke: #888; }
.shield text { font-family: "Open Sans", sans-serif; font-weight: 700; fill: #222; text-anchor: middle; }
.shield .light { fill: #fff; }
.pin { font: 900 15px "Liberation Sans", sans-serif; fill: #222; stroke: #fff; stroke-width: 4px; paint-order: stroke; text-anchor: middle; letter-spacing: 1px; }

.contacts { display: grid; grid-template-columns: repeat(3, 25%); justify-content: center; height: 320px; box-sizing: border-box; padding-top: 88px; text-align: center; }
.contacts p { margin-top: 14px; font-size: 22px; }

footer { height: 288px; box-sizing: border-box; padding-top: 83px; background: #eee; font-size: 16px; font-weight: 500; text-align: center; }
.credit { display: flex; justify-content: center; align-items: center; margin-top: 43px; }
.underlined { border-bottom: 2px solid #aaa; }
.sites { display: flex; align-items: center; gap: 4px; margin: 0 14px 0 11px; color: #333; font: 300 20px/46px Lato, sans-serif; }
.sites b { font-weight: 700; }
</style>
